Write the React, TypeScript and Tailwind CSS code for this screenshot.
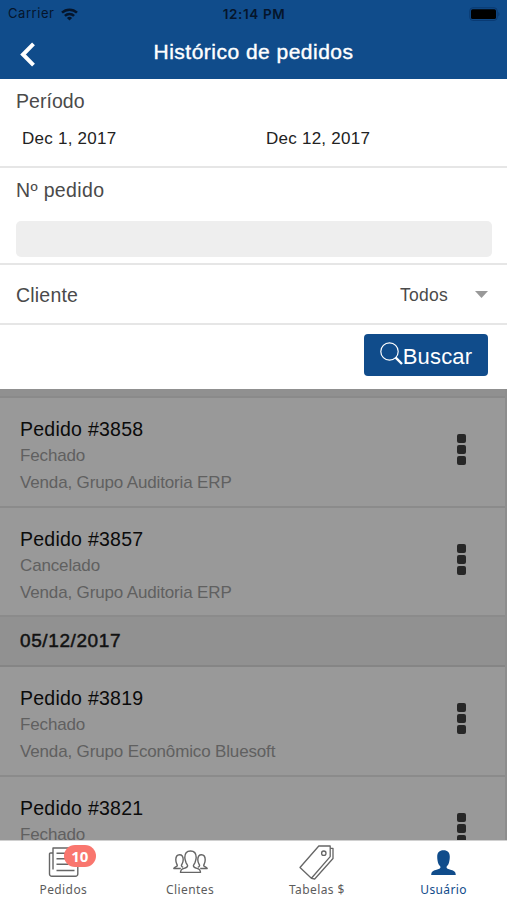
import type { ReactNode } from "react";

interface Order {
  id: number;
  status: string;
  detail: string;
}

interface OrderGroup {
  date?: string;
  orders: Order[];
}

interface Tab {
  label: string;
  icon: ReactNode;
  badge?: number;
  active?: boolean;
}

const groups: OrderGroup[] = [
  {
    orders: [
      { id: 3858, status: "Fechado", detail: "Venda, Grupo Auditoria ERP" },
      { id: 3857, status: "Cancelado", detail: "Venda, Grupo Auditoria ERP" },
    ],
  },
  {
    date: "05/12/2017",
    orders: [
      { id: 3819, status: "Fechado", detail: "Venda, Grupo Econômico Bluesoft" },
      { id: 3821, status: "Fechado", detail: "" },
    ],
  },
];

function WifiIcon() {
  return (
    <svg width="17" height="13" viewBox="0 0 17 13" fill="none" stroke="#05152b" strokeWidth="2.5">
      <path d="M1 4.7a10.8 10.8 0 0 1 15 0" />
      <path d="M3.9 7.9a6.6 6.6 0 0 1 9.2 0" />
      <path d="M8.5 12.6 5.9 10a3.8 3.8 0 0 1 5.2 0z" fill="#05152b" stroke="none" />
    </svg>
  );
}

function BatteryIcon() {
  return (
    <svg width="31" height="15" viewBox="0 0 31 15">
      <rect x="0.8" y="0.8" width="27.4" height="12.6" rx="3" fill="none" stroke="#0a3970" />
      <rect x="2" y="2.2" width="25" height="9.8" rx="1.6" fill="#000" />
      <path d="M29.3 5v4.4c1.5-.6 1.5-3.8 0-4.4z" fill="#0a3970" />
    </svg>
  );
}

function NewsIcon() {
  return (
    <svg width="31" height="31" viewBox="0 0 31 31" fill="none" stroke="#666" strokeWidth="1.4" strokeLinejoin="round">
      <path d="M5 6H2.500a1 1 0 0 0-1 1v20a2.300 2.300 0 0 0 2.300 2.300h23.700a2.300 2.300 0 0 0 2.300-2.300V1H5v21.500" />
      <path d="M8.500 6.200h12M8.500 11.700h12M8.500 17.300h12M8.500 23.500h18" strokeWidth="1.500" />
    </svg>
  );
}

function PeopleIcon() {
  return (
    <svg width="35" height="24" viewBox="0 0 35 24" fill="none" stroke="#666" strokeWidth="1.4" strokeLinejoin="round">
      <path d="M7.500 22.400c.2-2.800 1.100-3.500 3.600-4 2.300-.6 3.500-1.100 3.500-2.600 0-1.200-1-1.800-1.500-3.100-.5-1.600-1.300-3.100-1.300-5.100C11.800 3.400 13.500 1 17.500 1s5.700 2.400 5.700 6.600c0 2-.8 3.500-1.300 5.100-.5 1.300-1.500 1.900-1.500 3.100 0 1.500 1.200 2 3.500 2.600 2.500.5 3.400 1.200 3.600 4z" />
      <path d="M7.800 18.500H.8c.2-1.900 3.500-1.300 3.500-3 0-.9-1.500-2.200-1.500-5.700 0-3.300 1.300-5.100 3.700-5.100s3.700 1.800 3.700 5.100c0 3.500-1.800 4.800-1.800 5.700 0 1 .6 1.500 1.900 1.900" />
      <path d="M27.200 18.500h7c-.2-1.900-3.500-1.300-3.500-3 0-.9 1.500-2.200 1.500-5.700 0-3.300-1.300-5.100-3.700-5.100s-3.700 1.800-3.700 5.100c0 3.500 1.800 4.800 1.800 5.700 0 1-.6 1.500-1.900 1.900" />
    </svg>
  );
}

function TagsIcon() {
  return (
    <svg width="35" height="35" viewBox="0 0 35 35" fill="none" stroke="#666" strokeWidth="1.3" strokeLinejoin="round">
      <path d="M19.800 1h11.400v10.600L12.400 33.300 1 22.500z" />
      <path d="M31.200 3.300H34v10.200L15.700 34l-3.300-.7" />
      <circle cx="24.8" cy="8.2" r="2.2" />
    </svg>
  );
}

function PersonIcon() {
  return (
    <svg width="25" height="25" viewBox="0 0 25 25" fill="#104c8b">
      <path d="M.2 25c.2-3.200 1.200-4.200 4.600-5.100 3.400-.8 4.700-1.300 4.700-2.800 0-1.100-1.400-1.700-1.900-2.900C6.800 12.300 6.200 9.500 6.200 6.700 6.200 2.500 8.300.2 12.500.2s6.300 2.300 6.300 6.500c0 2.800-.6 5.600-1.400 7.500-.5 1.200-1.900 1.800-1.900 2.900 0 1.500 1.300 2 4.700 2.800 3.400.9 4.400 1.900 4.600 5.100z" />
    </svg>
  );
}

const tabs: Tab[] = [
  { label: "Pedidos", icon: <NewsIcon />, badge: 10 },
  { label: "Clientes", icon: <PeopleIcon /> },
  { label: "Tabelas $", icon: <TagsIcon /> },
  { label: "Usuário", icon: <PersonIcon />, active: true },
];

function OrderRow({ order }: { order: Order }) {
  return (
    <li className="flex h-[109.7px] shrink-0 items-start justify-between border-b-2 border-[#8b8b8b] pl-5 pr-[39px]">
      <div className="whitespace-nowrap pt-[18px] text-[17px] font-normal leading-[27px] tracking-[-0.15px] text-[#606060]">
        <h2 className="-mb-px text-[19.5px] leading-[27px] tracking-[0.25px] text-[#0b0b0b]">Pedido #{order.id}</h2>
        <p>{order.status}</p>
        <p>{order.detail}</p>
      </div>
      <button aria-label="Opções" className="mt-9 flex flex-col gap-[2px]">
        <span className="size-[9px] rounded-[2px] bg-[#272727]" />
        <span className="size-[9px] rounded-[2px] bg-[#272727]" />
        <span className="size-[9px] rounded-[2px] bg-[#272727]" />
      </button>
    </li>
  );
}

export default function App() {
  return (
    <div className="flex h-[900px] w-[507px] flex-col overflow-hidden bg-white font-['Liberation_Sans',Arial,sans-serif] text-[#4a4a4a]">
      {/* Status bar + title */}
      <header className="h-[79px] shrink-0 bg-[#104c8b]">
        <div className="grid h-7 grid-cols-3 items-center pl-2 pr-[7px] font-['Inter',sans-serif] text-[13px] text-[#05152b]">
          <div className="flex items-center gap-[7px]">
            <span className="tracking-[0.55px]">Carrier</span>
            <WifiIcon />
          </div>
          <span className="whitespace-nowrap text-center text-[13.5px] font-semibold tracking-[0.6px]">12:14 PM</span>
          <div className="flex justify-end">
            <BatteryIcon />
          </div>
        </div>
        <div className="grid h-[51px] grid-cols-[60px_1fr_60px] items-center">
          <button aria-label="Voltar" className="pl-[19px] pt-px">
            <svg width="17" height="25" viewBox="0 0 17 25" fill="none" stroke="#fff" strokeWidth="4">
              <path d="M14.500 1.800 4 12.500l10.500 10.700" />
            </svg>
          </button>
          <h1 className="pb-[3px] text-center text-[21px] leading-[48px] tracking-[0.48px] text-white [-webkit-text-stroke:0.4px_white]">
            Histórico de pedidos
          </h1>
        </div>
      </header>

      {/* Search filters */}
      <form className="flex h-[310px] shrink-0 flex-col bg-white">
        <section className="h-[89px] border-b-2 border-[#e6e6e6] pt-2.5">
          <h3 className="pl-4 text-[19.5px] leading-6 tracking-[0.05px]">Período</h3>
          <div className="flex pl-[22px] pt-[15px] text-[17px] leading-[22px] tracking-[0.25px] text-[#222]">
            <span className="w-[244px]">Dec 1, 2017</span>
            <span>Dec 12, 2017</span>
          </div>
        </section>
        <section className="h-[97px] border-b-2 border-[#e6e6e6] px-4 pt-2.5">
          <label htmlFor="pedido" className="block text-[19.5px] leading-6 tracking-[0.35px]">
            Nº pedido
          </label>
          <input id="pedido" className="mt-[18.5px] block h-9 w-[476px] rounded-[5px] bg-[#eee]" />
        </section>
        <section className="flex h-[60px] items-center border-b-2 border-[#e6e6e6] pl-4 pr-[19px]">
          <span className="flex-1 pt-[3px] text-[19.5px] tracking-[0.2px]">Cliente</span>
          <span className="mr-[27px] pt-[2px] text-[17.5px] tracking-[0.25px]">Todos</span>
          <svg width="13" height="7" viewBox="0 0 13 7" fill="#999">
            <path d="M0 0h13L6.500 7z" />
          </svg>
        </section>
        <div className="flex justify-end pr-[19px] pt-[9px]">
          <button
            type="button"
            className="flex h-[42px] w-[124px] items-center justify-center rounded-[4px] bg-[#104c8b] text-[22px] leading-[42px] tracking-[0.2px] text-white"
          >
            <svg className="-mt-1" width="23" height="23" viewBox="0 0 23 23" fill="none" stroke="#fff">
              <circle cx="9.500" cy="9.500" r="8.700" strokeWidth="1.2" />
              <path d="m15.700 15.700 6.300 6.300" strokeWidth="2.4" />
            </svg>
            <span className="pt-[3px]">Buscar</span>
          </button>
        </div>
      </form>

      {/* Dimmed order history */}
      <main className="min-h-0 flex-1 overflow-hidden bg-[#8d8d8d] pr-[2px]">
        <div className="h-[9px] border-b-2 border-[#8a8a8a] bg-[#909090]" />
        {groups.map((group, i) => (
          <section key={i}>
            {group.date && (
              <h3 className="flex h-[49.5px] items-center border-b-2 border-[#858585] bg-[#919191] pl-5 text-[19px] tracking-[0.6px] text-[#111] [-webkit-text-stroke:0.5px_#111]">
                {group.date}
              </h3>
            )}
            <ul className="bg-[#999]">
              {group.orders.map((order) => (
                <OrderRow key={order.id} order={order} />
              ))}
            </ul>
          </section>
        ))}
      </main>

      {/* Bottom tabs */}
      <nav className="grid h-[60px] shrink-0 grid-cols-4 border-t border-[#d0d0d0] bg-white font-['Noto_Sans',sans-serif] text-xs">
        {tabs.map((tab) => (
          <a key={tab.label} className="flex flex-col items-center">
            <span className="relative flex h-[42px] items-center">
              {tab.icon}
              {tab.badge && (
                <span className="absolute left-4 top-1 flex h-[22px] w-8 items-center justify-center rounded-full bg-[#f9766e] text-[15px] font-bold leading-[22px] text-white">
                  {tab.badge}
                </span>
              )}
            </span>
            <span
              className={
                tab.active
                  ? "leading-[14px] tracking-[0.4px] text-[#104c8b]"
                  : "leading-[14px] tracking-[0.4px] text-[#5c5c5c]"
              }
            >
              {tab.label}
            </span>
          </a>
        ))}
      </nav>
    </div>
  );
}
